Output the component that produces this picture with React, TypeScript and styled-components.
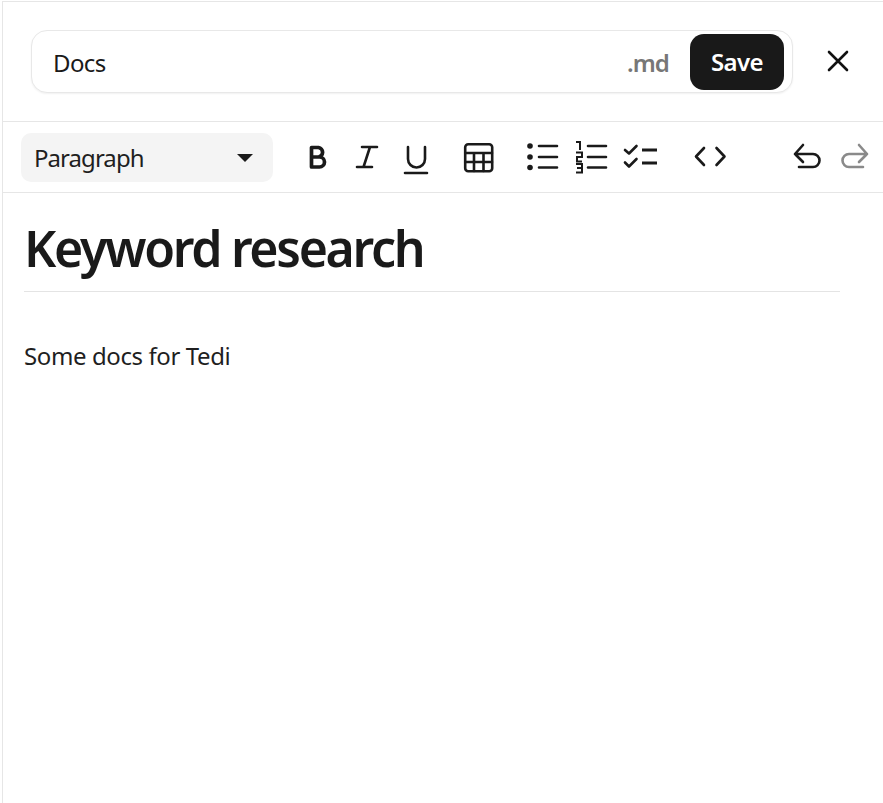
import React from "react";
import styled, { createGlobalStyle } from "styled-components";

const Global = createGlobalStyle`
  html, body { margin: 0; padding: 0; background: #fff; }
  body { font-family: "Noto Sans", "Open Sans", sans-serif; color: #1a1a1a; }
`;

const Frame = styled.div`
  box-sizing: border-box;
  width: 883px;
  height: 803px;
  overflow: hidden;
  margin: 0;
  padding-top: 1px;
  padding-left: 2px;
`;
const Panel = styled.div`
  box-sizing: border-box;
  height: 802px;
  border-top: 1px solid #e6e6e6;
  border-left: 1px solid #e6e6e6;
`;
const Header = styled.header`
  box-sizing: border-box;
  height: 120px;
  display: flex;
  align-items: flex-start;
  padding: 28px 0 0 28px;
  border-bottom: 1px solid #e6e6e6;
`;
const NameField = styled.div`
  box-sizing: border-box;
  width: 762px;
  height: 63px;
  display: flex;
  align-items: center;
  padding: 0 8px 0 21px;
  border: 1px solid #e8e8e8;
  border-radius: 16px;
  box-shadow: 0 1px 2px rgba(0, 0, 0, 0.06);
  background: #fff;
`;
const NameText = styled.span`
  flex: 1;
  font-size: 24px;
  letter-spacing: -0.6px;
  color: #1a1a1a;
  padding-top: 1px;
`;
const Extension = styled.span`
  font-size: 24px;
  font-weight: 600;
  letter-spacing: -0.9px;
  color: #777;
  margin-right: 21px;
  padding-top: 1px;
`;
const SaveButton = styled.button`
  width: 94px;
  height: 56px;
  border: 0;
  border-radius: 14px;
  background: #191919;
  color: #fff;
  font-family: inherit;
  font-size: 24px;
  font-weight: 600;
  letter-spacing: -0.6px;
  padding: 0;
`;
const CloseButton = styled.button`
  width: 28px;
  height: 28px;
  margin: 17px 0 0 31px;
  padding: 0;
  border: 0;
  background: none;
  display: flex;
  color: #111;
`;
const Toolbar = styled.div`
  box-sizing: border-box;
  height: 71px;
  display: flex;
  align-items: flex-start;
  padding: 11px 0 0 18px;
  border-bottom: 1px solid #e6e6e6;
`;
const BlockSelect = styled.div`
  box-sizing: border-box;
  width: 252px;
  height: 49px;
  display: flex;
  align-items: center;
  justify-content: space-between;
  padding: 0 20px 0 13px;
  border-radius: 10px;
  background: #f4f4f4;
  font-size: 24px;
  letter-spacing: -0.95px;
  color: #1f1f1f;
`;
const Caret = styled.span`
  width: 0;
  height: 0;
  border-left: 8px solid transparent;
  border-right: 8px solid transparent;
  border-top: 8px solid #1a1a1a;
`;
const ToolIcon = styled.svg<{ $left: number; $muted?: boolean; $heavy?: boolean }>`
  flex: none;
  width: 36px;
  height: 36px;
  margin-top: 6px;
  margin-left: ${(p) => p.$left}px;
  fill: none;
  stroke: ${(p) => (p.$muted ? "#8a8a8a" : "#1a1a1a")};
  stroke-width: ${(p) => (p.$heavy ? 3.7 : 2.6)};
  stroke-linecap: ${(p) => (p.$heavy ? "butt" : "round")};
  stroke-linejoin: round;
`;
const Dot = styled.circle`
  fill: #1a1a1a;
  stroke: none;
`;
const Editor = styled.main`
  padding: 20px 0 0 21px;
  width: 816px;
`;
const Title = styled.h1`
  margin: 0;
  height: 79px;
  box-sizing: border-box;
  border-bottom: 1px solid #e4e4e4;
  font-size: 50px;
  line-height: 70px;
  font-weight: 600;
  letter-spacing: -2.3px;
  color: #1a1a1a;
  white-space: nowrap;
`;
const Body = styled.p`
  margin: 46px 0 0;
  font-size: 24px;
  line-height: 36px;
  font-weight: 400;
  letter-spacing: -0.4px;
  color: #1f1f1f;
`;

export default function App() {
  return (
    <Frame>
      <Global />
      <Panel>
        <Header>
          <NameField>
            <NameText>Docs</NameText>
            <Extension>.md</Extension>
            <SaveButton>Save</SaveButton>
          </NameField>
          <CloseButton aria-label="Close">
            <svg width="28" height="28" viewBox="0 0 28 28" fill="none" stroke="currentColor" strokeWidth="2.6" strokeLinecap="round">
              <path d="M5 5 L23 23 M23 5 L5 23" />
            </svg>
          </CloseButton>
        </Header>
        <Toolbar>
          <BlockSelect>
            Paragraph
            <Caret />
          </BlockSelect>
          <ToolIcon $left={27} $heavy viewBox="0 0 36 36">
            <path d="M11.500 8.500 H18.500 A4.800 4.800 0 0 1 18.500 18 H11.500 Z M11.500 18 H19.500 A5 5 0 0 1 19.500 28 H11.500 Z" />
          </ToolIcon>
          <ToolIcon $left={12} viewBox="0 0 36 36">
            <path d="M14 8 H29 M9 28 H24 M22 8 L15.500 28" />
          </ToolIcon>
          <ToolIcon $left={14} viewBox="0 0 36 36">
            <path d="M10 8 V20 A8.500 8.500 0 0 0 27 20 V8 M7 34 H29" />
          </ToolIcon>
          <ToolIcon $left={27} viewBox="0 0 36 36">
            <rect x="4.200" y="5.200" width="27" height="27" rx="3" />
            <path d="M4.200 14 H31 M4.200 23 H31 M13 14 V32 M22.500 14 V32" />
          </ToolIcon>
          <ToolIcon $left={27} viewBox="0 0 36 36">
            <Dot cx="6" cy="7" r="2.800" />
            <Dot cx="6" cy="18" r="2.800" />
            <Dot cx="6" cy="28.500" r="2.800" />
            <path d="M15 7 H33 M15 18 H33 M15 28.500 H33" />
          </ToolIcon>
          <ToolIcon $left={13} viewBox="0 0 36 36">
            <path d="M15 7 H33 M15 18 H33 M15 28.500 H33" />
            <path strokeWidth="2" strokeLinecap="butt" strokeLinejoin="miter" d="M3 3 H7 V11 M3 13.500 H9 V18 H4 V22.500 H9 M3 25 H9 V33.500 H3 M4 29 H9" />
          </ToolIcon>
          <ToolIcon $left={13} viewBox="0 0 36 36">
            <path d="M3 11 L7 14.500 L14.500 7 M3 23.500 L7 27.500 L14.500 20" />
            <path strokeWidth="3" strokeLinecap="butt" d="M20 11 H35 M20 24 H35" />
          </ToolIcon>
          <ToolIcon $left={34} viewBox="0 0 36 36">
            <path d="M12 9 L4 17.500 L12 26 M24.500 9 L32.500 17.500 L24.500 26" />
          </ToolIcon>
          <ToolIcon $left={61} viewBox="0 0 36 36">
            <path d="M14 6 L6 15 L14 23 M6 15 H24 A6.500 6.500 0 0 1 24 28 H10" />
          </ToolIcon>
          <ToolIcon $left={12} $muted viewBox="0 0 36 36">
            <path d="M22 6 L30 15 L22 23 M30 15 H12 A6.500 6.500 0 0 0 12 28 H26" />
          </ToolIcon>
        </Toolbar>
        <Editor>
          <Title>Keyword research</Title>
          <Body>Some docs for Tedi</Body>
        </Editor>
      </Panel>
    </Frame>
  );
}
